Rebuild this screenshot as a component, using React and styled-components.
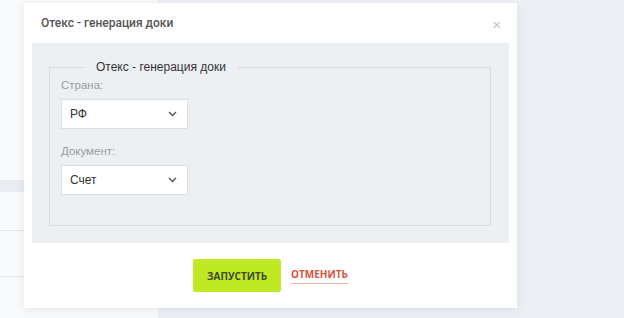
import React from 'react';
import styled, { createGlobalStyle } from 'styled-components';

const GlobalStyle = createGlobalStyle`
  html, body {
    margin: 0;
    padding: 0;
    background: #eceff3;
    font-family: Roboto, "Liberation Sans", sans-serif;
  }
  * { box-sizing: border-box; }
`;

const Page = styled.div`
  display: flex;
  width: 624px;
  height: 318px;
  overflow: hidden;
`;

const SidePanel = styled.div`
  width: 158px;
  background: #f9fafc;
  display: flex;
  flex-direction: column;
  padding-top: 180px;
`;

const SideBand = styled.div`
  height: 12px;
  background: #e9ecf0;
`;

const SideRow = styled.div`
  height: ${(p) => p.h}px;
  border-bottom: 1px solid #e3e6ea;
`;

const Main = styled.div`
  flex: 1;
  background: #eceff3;
`;

const Modal = styled.div`
  position: absolute;
  left: 24px;
  top: 3px;
  width: 493px;
  background: #fff;
  box-shadow: 0 2px 10px rgba(0, 0, 0, 0.08);
  display: flex;
  flex-direction: column;
`;

const Header = styled.div`
  height: 40px;
  display: flex;
  align-items: center;
  justify-content: space-between;
  padding: 0 16px 0 17px;
`;

const Title = styled.div`
  font-family: Roboto, "Liberation Sans", sans-serif;
  font-weight: 500;
  font-size: 12px;
  color: #555;
`;

const Close = styled.button`
  border: none;
  background: none;
  padding: 0;
  margin-top: 2px;
  color: #c2c2c2;
  font-size: 15px;
  line-height: 1;
  font-family: "Liberation Sans", sans-serif;
`;

const Body = styled.div`
  margin: 0 8px;
  background: #edf0f3;
  padding: 16px 18px 17px 17px;
`;

const Fieldset = styled.fieldset`
  margin: 0;
  border: 1px solid #d8dce0;
  padding: 0 11px 30px 11px;
  display: flex;
  flex-direction: column;
  align-items: flex-start;
`;

const Legend = styled.legend`
  margin-left: 23px;
  padding: 0 12px;
  font-family: "Liberation Sans", Arial, sans-serif;
  font-size: 12px;
  color: #333;
  line-height: 17px;
`;

const Label = styled.div`
  font-family: "Liberation Sans", Arial, sans-serif;
  font-size: 11.5px;
  color: #9b9b9b;
  line-height: 14px;
  margin-top: ${(p) => p.top}px;
  margin-bottom: 7px;
`;

const Select = styled.div`
  width: 127px;
  height: 30px;
  background: #fff;
  border: 1px solid #dcdfe3;
  display: flex;
  align-items: center;
  justify-content: space-between;
  padding: 0 10px 0 8px;
  font-family: "Liberation Sans", Arial, sans-serif;
  font-size: 12px;
  color: #333;
`;

const Footer = styled.div`
  height: 65px;
  display: flex;
  align-items: center;
  justify-content: center;
  gap: 10px;
  font-family: "Open Sans", sans-serif;
`;

const RunButton = styled.button`
  width: 88px;
  height: 33px;
  border: none;
  border-radius: 2px;
  background: #bfe825;
  color: #3c4a2a;
  font-family: "Open Sans", sans-serif;
  font-weight: 700;
  font-size: 10px;
`;

const CancelLink = styled.span`
  color: #d9533c;
  font-weight: 700;
  font-size: 10px;
  padding-bottom: 2px;
  border-bottom: 1px solid #f0b3a8;
`;

const Chevron = () => (
  <svg width="9" height="6" viewBox="0 0 9 6">
    <path d="M1 1l3.5 3.5L8 1" fill="none" stroke="#555" strokeWidth="1.4" />
  </svg>
);

export default function App() {
  return (
    <>
      <GlobalStyle />
      <Page>
        <SidePanel>
          <SideBand />
          <SideRow h={39} />
          <SideRow h={46} />
        </SidePanel>
        <Main />
      </Page>
      <Modal>
        <Header>
          <Title>Отекс - генерация доки</Title>
          <Close>×</Close>
        </Header>
        <Body>
          <Fieldset>
            <Legend>Отекс - генерация доки</Legend>
            <Label top={2}>Страна:</Label>
            <Select>
              <span>РФ</span>
              <Chevron />
            </Select>
            <Label top={15}>Документ:</Label>
            <Select>
              <span>Счет</span>
              <Chevron />
            </Select>
          </Fieldset>
        </Body>
        <Footer>
          <RunButton>ЗАПУСТИТЬ</RunButton>
          <CancelLink>ОТМЕНИТЬ</CancelLink>
        </Footer>
      </Modal>
    </>
  );
}
